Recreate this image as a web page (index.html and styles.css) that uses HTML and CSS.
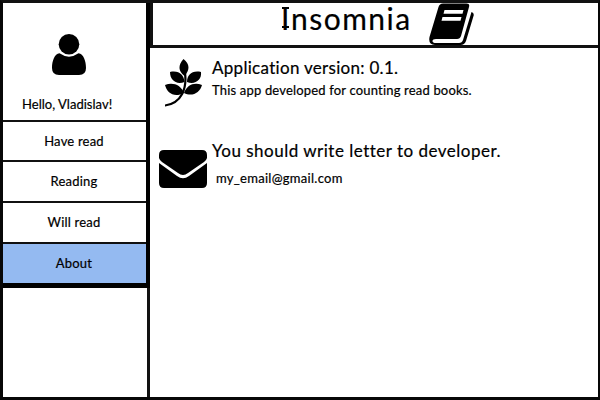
FILE: index.html
```html
<!DOCTYPE html>
<html lang="en">
<head>
<meta charset="utf-8">
<title>Insomnia</title>
<link rel="stylesheet" href="styles.css">
</head>
<body>
<div class="app">
  <aside class="sidebar">
    <div class="menu">
      <section class="profile">
        <svg class="user" viewBox="0 0 34 42"><circle cx="17" cy="10.3" r="10.3"/><path d="M7.5 19.3Q17 26 26.5 19.3C31.500 20 34 27 34 34Q34 41 27 41H7Q0 41 0 34C0 27 2.500 20 7.500 19.300Z"/></svg>
        <p class="hello">Hello, Vladislav!</p>
      </section>
      <nav class="nav">
        <a class="item">Have read</a>
        <a class="item tall">Reading</a>
        <a class="item tall">Will read</a>
        <a class="item active">About</a>
      </nav>
    </div>
    <div class="rest"></div>
  </aside>
  <main class="main">
    <header class="header">
      <h1><span class="cap">I</span>nsomnia</h1>
      <svg class="book" viewBox="0 0 46 42"><path d="M14 .5H37.500Q41 .5 40 4L32 33Q31 36 28 36H7Q3.500 36 3.500 38Q3.500 40 7 40H30Q33 40 34 37L42.500 9Q45.500 10 44.500 13L37 38Q35.500 42 31.500 42H6Q-1 42 .5 34L9.500 4Q10.500 .5 14 .5Z"/><path class="cut" d="M15.500 7H34.500L33.500 10.800H14.500ZM13.500 14H32.500L31.500 17.800H12.500Z"/></svg>
    </header>
    <section class="row version">
      <svg class="leaf" viewBox="0 0 38 48"><path d="M18.500 0C25 5 25 11 19.500 17C13 12 13 6 18.500 0ZM5 13C14 11 19 16 19.500 23C11 26 5 21 5 13ZM36 13C37 21 30 26 22 23C22 16 27 11 36 13ZM0 26C8 23 16 26 19 34C9 39 2 34 0 26ZM37 26C35 34 27 38 19 34C22 26 29 23 37 26Z"/><path class="stem" d="M20 14C22 29 17 44 0 46.500"/></svg>
      <div class="copy">
        <h2>Application version: 0.1.</h2>
        <p>This app developed for counting read books.</p>
      </div>
    </section>
    <section class="row contact">
      <svg class="mail" viewBox="0 0 48 38"><path d="M5 0H43Q48 0 48 5V8Q47.500 10 45 12L29 23Q24 27 19 23L3 12Q.5 10 0 8V5Q0 0 5 0ZM0 13L18 26Q24 30.500 30 26L48 13V33Q48 38 43 38H5Q0 38 0 33Z"/></svg>
      <div class="copy">
        <h2>You should write letter to developer.</h2>
        <p>my_email@gmail.com</p>
      </div>
    </section>
  </main>
</div>
</body>
</html>
```
FILE: styles.css
```css
* { box-sizing: border-box; }
body { margin: 0; background: #fff; color: #000; font-family: Lato, "Liberation Sans", sans-serif; font-size: 13px; font-variant-ligatures: none; -webkit-text-stroke: .2px #000; }
h1, h2, p { margin: 0; font-weight: 400; white-space: nowrap; }
svg { display: block; flex: none; }
.app { width: 600px; height: 400px; display: flex; border: solid #070707; border-width: 3px 2px 3px 3px; border-top-color: #111; }
.sidebar { width: 147px; display: flex; flex-direction: column; }
.menu { height: 285px; border-right: 4px solid #000; border-bottom: 5px solid #000; flex: none; }
.rest { flex: 1; border-right: 3px solid #111; }
.profile { height: 119px; border-bottom: 2px solid #111; padding-top: 31px; }
.user { width: 34px; height: 42px; margin-left: 49px; }
.hello { margin: 20px 0 0 19px; line-height: 16px; letter-spacing: .02px; }
.item { height: 40px; display: flex; align-items: center; justify-content: center; border-bottom: 2px solid #111; line-height: 16px; padding: 0 1px 1px 0; letter-spacing: .2px; }
.item.tall { height: 41px; }
.item.active { height: 39px; background: #94baf1; border: 0; }
.main { flex: 1; min-width: 0; }
.header { height: 45px; border-left: 3px solid #111; border-bottom: 3px solid #111; display: flex; align-items: center; padding-left: 128px; }
h1 { width: 148px; font-size: 30px; line-height: 36px; margin-top: -13px; letter-spacing: 1.5px; }
.cap { position: relative; }
.cap::before, .cap::after { content: ""; position: absolute; left: 1px; width: 7px; height: 2px; background: #000; }
.cap::before { top: 7px; }
.cap::after { bottom: 8px; }
.book { width: 46px; height: 42px; margin-top: -1px; }
.row { display: flex; }
.version { margin-top: 11px; height: 82px; padding-left: 15px; }
.leaf { width: 38px; height: 48px; }
.version .copy { margin-left: 9px; margin-top: -1px; }
.version h2 { letter-spacing: .3px; }
.stem { fill: none; stroke: #000; stroke-width: 2.200; stroke-linecap: round; }
.cut { fill: #fff; }
h2 { font-size: 17px; line-height: 20px; }
.version p { line-height: 16px; margin-top: 4px; letter-spacing: .18px; }
.contact { padding-left: 9px; }
.mail { width: 48px; height: 38px; margin-top: 9px; }
.contact .copy { margin-left: 5px; }
.contact h2 { letter-spacing: .5px; }
.contact p { line-height: 16px; margin: 9px 0 0 4px; letter-spacing: .28px; }
```
